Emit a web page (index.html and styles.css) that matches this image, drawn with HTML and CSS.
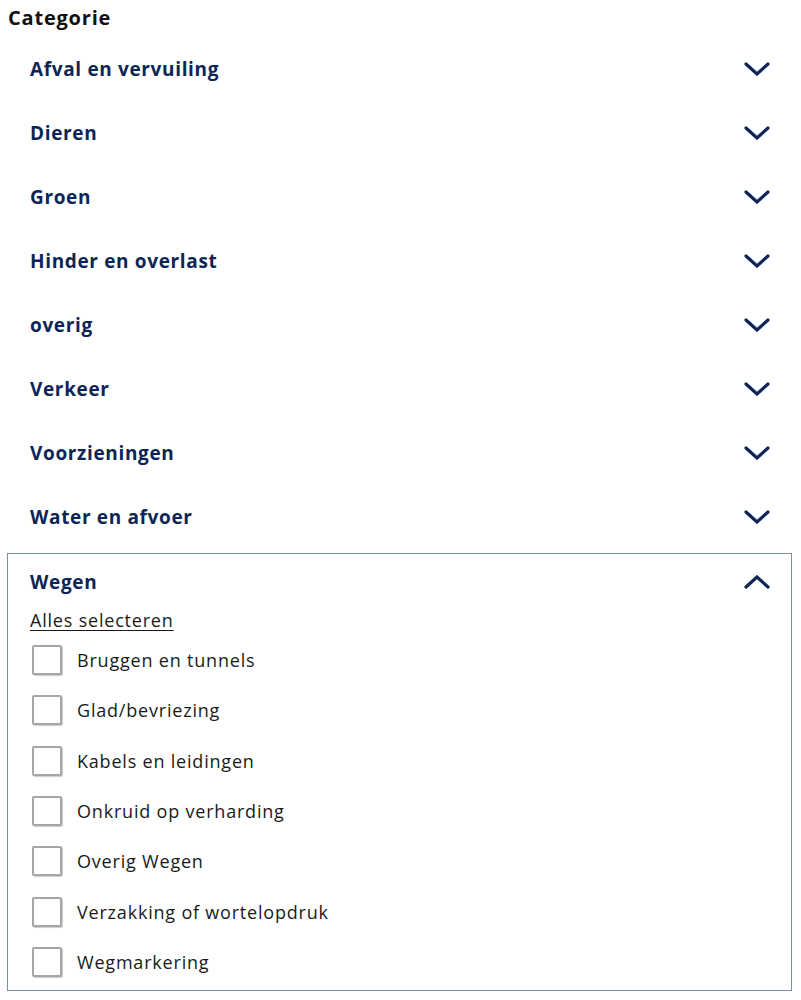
FILE: index.html
```html
<!DOCTYPE html>
<html lang="nl">
<head>
<meta charset="utf-8">
<title>Categorie</title>
<link rel="stylesheet" href="styles.css">
</head>
<body>
<div class="filter">
  <div class="legend">Categorie</div>
  <div class="groups">
    <div class="group"><div class="head"><span class="title">Afval en vervuiling</span><svg class="chev" viewBox="0 0 26 14"><path d="M2 2 L13 12 L24 2"/></svg></div></div>
    <div class="group"><div class="head"><span class="title">Dieren</span><svg class="chev" viewBox="0 0 26 14"><path d="M2 2 L13 12 L24 2"/></svg></div></div>
    <div class="group"><div class="head"><span class="title">Groen</span><svg class="chev" viewBox="0 0 26 14"><path d="M2 2 L13 12 L24 2"/></svg></div></div>
    <div class="group"><div class="head"><span class="title">Hinder en overlast</span><svg class="chev" viewBox="0 0 26 14"><path d="M2 2 L13 12 L24 2"/></svg></div></div>
    <div class="group"><div class="head"><span class="title">overig</span><svg class="chev" viewBox="0 0 26 14"><path d="M2 2 L13 12 L24 2"/></svg></div></div>
    <div class="group"><div class="head"><span class="title">Verkeer</span><svg class="chev" viewBox="0 0 26 14"><path d="M2 2 L13 12 L24 2"/></svg></div></div>
    <div class="group"><div class="head"><span class="title">Voorzieningen</span><svg class="chev" viewBox="0 0 26 14"><path d="M2 2 L13 12 L24 2"/></svg></div></div>
    <div class="group"><div class="head"><span class="title">Water en afvoer</span><svg class="chev" viewBox="0 0 26 14"><path d="M2 2 L13 12 L24 2"/></svg></div></div>
    <div class="group open">
      <div class="head"><span class="title">Wegen</span><svg class="chev" viewBox="0 0 26 14"><path d="M2 12 L13 2 L24 12"/></svg></div>
      <div class="body">
        <a class="select-all" href="#">Alles selecteren</a>
        <ul class="options">
          <li><span class="box"></span><span>Bruggen en tunnels</span></li>
          <li><span class="box"></span><span>Glad/bevriezing</span></li>
          <li><span class="box"></span><span>Kabels en leidingen</span></li>
          <li><span class="box"></span><span>Onkruid op verharding</span></li>
          <li><span class="box"></span><span>Overig Wegen</span></li>
          <li><span class="box"></span><span>Verzakking of wortelopdruk</span></li>
          <li><span class="box"></span><span>Wegmarkering</span></li>
        </ul>
      </div>
    </div>
  </div>
</div>
</body>
</html>
```
FILE: styles.css
```css
* { box-sizing: border-box; }
body {
  margin: 0;
  background: #fff;
  font-family: "Open Sans", Lato, sans-serif;
}
.filter {
  padding: 7px 9px 0 7px;
}
.legend {
  font-weight: 700;
  font-size: 20px;
  line-height: 22px;
  letter-spacing: 0.8px;
  color: #111;
  padding-left: 1px;
  margin-bottom: 8px;
}
.group {
  border: 1px solid transparent;
}
.group.open {
  border-color: #7d8aa8;
  margin-top: 4px;
}
.head {
  height: 62px;
  display: flex;
  align-items: center;
  justify-content: space-between;
  padding: 0 21px 0 22px;
}
.group.open .head { height: 55px; }
.title {
  font-size: 19px;
  font-weight: 700;
  letter-spacing: 0.65px;
  color: #0c2557;
}
.chev {
  width: 26px;
  height: 14px;
  fill: none;
  stroke: #0c2557;
  stroke-width: 3.2;
  stroke-linecap: round;
  stroke-linejoin: miter;
}
.body {
  padding: 0 22px 3px 22px;
}
.select-all {
  display: inline-block;
  font-size: 18px;
  letter-spacing: 0.8px;
  color: #1a1a1a;
  text-decoration: underline;
  text-underline-offset: 3px;
  line-height: 22px;
  margin-bottom: 4px;
}
.options {
  list-style: none;
  margin: 0;
  padding: 0;
}
.options li {
  display: flex;
  align-items: center;
  height: 50.3px;
  font-size: 18px;
  letter-spacing: 0.8px;
  color: #1a1a1a;
}
.box {
  width: 30px;
  height: 30px;
  margin-left: 2px;
  margin-right: 15px;
  border: 2px solid #a6a6a6;
  border-radius: 2px;
  box-shadow: 1px 1px 1px rgba(0,0,0,0.2);
  background: #fff;
  flex: none;
}
```
